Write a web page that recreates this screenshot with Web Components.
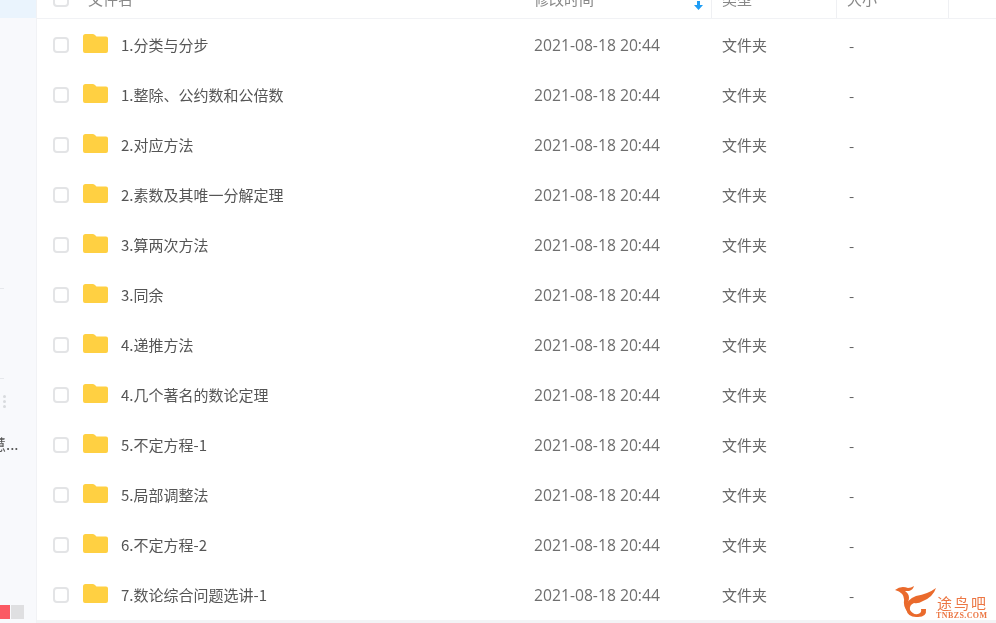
<!DOCTYPE html>
<html lang="zh">
<head>
<meta charset="utf-8">
<title>文件列表</title>
<style>
    html, body {
        margin: 0;
        height: 100%;
        overflow: hidden;
        background: #fff;
    }
    body {
        font-family: "Noto Sans CJK SC", "Liberation Sans", sans-serif;
    }
</style>
</head>
<body>
<file-page></file-page>

<template id="side-tpl">
    <style>
        :host {
            display: flex;
            flex-direction: column;
            width: 36px;
            height: 623px;
            flex: none;
            overflow: hidden;
            background: #f8f9fc;
            border-right: 1px solid #f1f2f5;
            box-sizing: content-box;
            color: #555;
            font-size: 15px;
            filter: blur(0.4px);
        }
        .selected { height: 18px; flex: none; background: #eaf4fd; }
        .rule { height: 1px; width: 4px; flex: none; background: #e6e8ec; }
        .rule.first { margin-top: 270px; }
        .rule.second { margin-top: 89px; }
        .grip {
            display: flex;
            flex-direction: column;
            gap: 2px;
            flex: none;
            margin: 16px 0 0 3px;
        }
        .grip i { width: 3px; height: 3px; border-radius: 50%; background: #d8dade; }
        .clipped {
            flex: none;
            height: 20px;
            line-height: 20px;
            margin: 26px 0 0 -9px;
            white-space: nowrap;
        }
        .quota {
            display: flex;
            gap: 1px;
            flex: none;
            height: 14px;
            margin-top: 151px;
        }
        .quota b { width: 10px; background: #fb5a64; }
        .quota u { width: 13px; background: #dfdfe1; }
    </style>
    <div class="selected"></div>
    <div class="rule first"></div>
    <div class="rule second"></div>
    <div class="grip"><i></i><i></i><i></i></div>
    <div class="clipped">慧...</div>
    <div class="quota"><b></b><u></u></div>
</template>

<template id="head-tpl">
    <style>
        :host {
            display: grid;
            grid-template-columns: 488px 187px 125px 112px 1fr;
            height: 39px;
            margin-top: -20px;
            flex: none;
            box-sizing: border-box;
            border-bottom: 1px solid #f1f2f5;
            color: #888;
            font-size: 15px;
            line-height: 38px;
            filter: blur(0.4px);
        }
        .cell { position: relative; padding-left: 10px; border-right: 1px solid #eff0f3; white-space: nowrap; }
        .name { display: flex; padding-left: 16px; gap: 19px; align-items: center; border-right: 0; }
        .time { padding-left: 9px; }
        .box {
            width: 16px;
            height: 16px;
            box-sizing: border-box;
            border: 2px solid #e3e4e6;
            border-radius: 4px;
            background: #fff;
        }
        .time svg { position: absolute; left: 168px; top: 20px; }
        .last { border-right: 0; }
    </style>
    <div class="cell name"><span class="box"></span><span>文件名</span></div>
    <div class="cell time">修改时间<svg width="11" height="12" viewBox="0 0 11 12"><path d="M4 1h3v4h3l-4.500 5L1 5h3z" fill="#1e9df5"/></svg></div>
    <div class="cell">类型</div>
    <div class="cell">大小</div>
    <div class="cell last"></div>
</template>

<template id="row-tpl">
    <style>
        :host {
            display: grid;
            grid-template-columns: 487px 187px 125px 1fr;
            align-items: center;
            height: 50px;
            flex: none;
            color: #666;
            font-size: 15px;
            filter: blur(0.45px);
        }
        .name { display: flex; align-items: center; padding-left: 16px; }
        .box {
            width: 16px;
            height: 16px;
            flex: none;
            box-sizing: border-box;
            border: 2px solid #e3e4e6;
            border-radius: 4px;
            background: #fff;
        }
        svg { flex: none; margin: -4px 0 0 14px; }
        .label { margin: -2px 0 0 13px; color: #555; white-space: nowrap; }
        .time { padding-left: 10px; font-family: "Open Sans", "Noto Sans CJK SC", sans-serif; font-size: 15.7px; color: #6e6e6e; }
        .type { padding-left: 11px; margin-top: -2px; }
        .size { padding-left: 13px; }
    </style>
    <div class="name">
        <span class="box"></span>
        <svg width="25" height="19" viewBox="0 0 25 19">
            <path d="M0 2.500Q0 0 2.500 0H9.500Q11 0 12 1L13.500 2.500H23Q25 2.500 25 4.500V17Q25 19 23 19H2Q0 19 0 17Z" fill="#ffd042"/>
        </svg>
        <span class="label"><slot></slot></span>
    </div>
    <div class="time"></div>
    <div class="type">文件夹</div>
    <div class="size">-</div>
</template>

<template id="mark-tpl">
    <style>
        :host {
            display: block;
            position: absolute;
            left: 893px;
            top: 585px;
            width: 100px;
            height: 36px;
            color: #ec7744;
            filter: blur(0.35px);
        }
        svg { position: absolute; left: 0; top: 0; }
        .cn {
            position: absolute;
            left: 44px;
            top: 10px;
            font-size: 15px;
            line-height: 16px;
            letter-spacing: 2px;
            white-space: nowrap;
        }
        .en {
            position: absolute;
            left: 43px;
            top: 26px;
            font: bold 8px/9px "Liberation Serif", serif;
            letter-spacing: 0.4px;
            white-space: nowrap;
        }
    </style>
    <svg width="44" height="36" viewBox="0 0 44 36" fill="#ea6a2c">
        <path d="M2 5Q8 0 15 3Q18 3 21 1Q20 5 16 6Q13 6 12 6Q18 10 15 17Q14 22 18 30Q10 24 11 16Q12 8 2 5Z"/>
        <path d="M43 3Q40 12 30 16Q25 19 21 18Q16 20 17 25Q20 30 25 29Q29 28 28 24L33 24Q34 32 25 32Q15 33 13 24Q12 15 23 11Q35 9 43 3Z"/>
    </svg>
    <span class="cn">途鸟吧</span>
    <span class="en">TNBZS.COM</span>
</template>

<script>
const ROWS = [
    "1.分类与分步",
    "1.整除、公约数和公倍数",
    "2.对应方法",
    "2.素数及其唯一分解定理",
    "3.算两次方法",
    "3.同余",
    "4.递推方法",
    "4.几个著名的数论定理",
    "5.不定方程-1",
    "5.局部调整法",
    "6.不定方程-2",
    "7.数论综合问题选讲-1",
];

function fromTemplate(host, id) {
    const shadow = host.attachShadow({ mode: "open" });
    shadow.appendChild(document.getElementById(id).content.cloneNode(true));
    return shadow;
}

class SideBar extends HTMLElement {
    connectedCallback() {
        fromTemplate(this, "side-tpl");
    }
}

class ListHead extends HTMLElement {
    connectedCallback() {
        fromTemplate(this, "head-tpl");
    }
}

class FileRow extends HTMLElement {
    connectedCallback() {
        const shadow = fromTemplate(this, "row-tpl");
        shadow.querySelector(".time").textContent = this.getAttribute("time");
    }
}

class SiteMark extends HTMLElement {
    connectedCallback() {
        fromTemplate(this, "mark-tpl");
    }
}

class FilePage extends HTMLElement {
    connectedCallback() {
        const shadow = this.attachShadow({ mode: "open" });
        shadow.innerHTML = `<style>
            :host {
                display: flex;
                position: relative;
                width: 996px;
                height: 623px;
                overflow: hidden;
            }
            main {
                display: flex;
                flex-direction: column;
                flex: 1;
                min-width: 0;
            }
            #rows {
                margin-top: 1px;
            }
            .end {
                height: 3px;
                flex: none;
                background: #f3f4f6;
            }
        </style>
        <side-bar></side-bar>
        <main>
            <list-head></list-head>
            <div id="rows"></div>
            <div class="end"></div>
        </main>
        <site-mark></site-mark>`;
        const rows = shadow.getElementById("rows");
        for (const name of ROWS) {
            const row = document.createElement("file-row");
            row.setAttribute("time", "2021-08-18 20:44");
            row.textContent = name;
            rows.appendChild(row);
        }
    }
}

customElements.define("side-bar", SideBar);
customElements.define("list-head", ListHead);
customElements.define("file-row", FileRow);
customElements.define("site-mark", SiteMark);
customElements.define("file-page", FilePage);
</script>
</body>
</html>
